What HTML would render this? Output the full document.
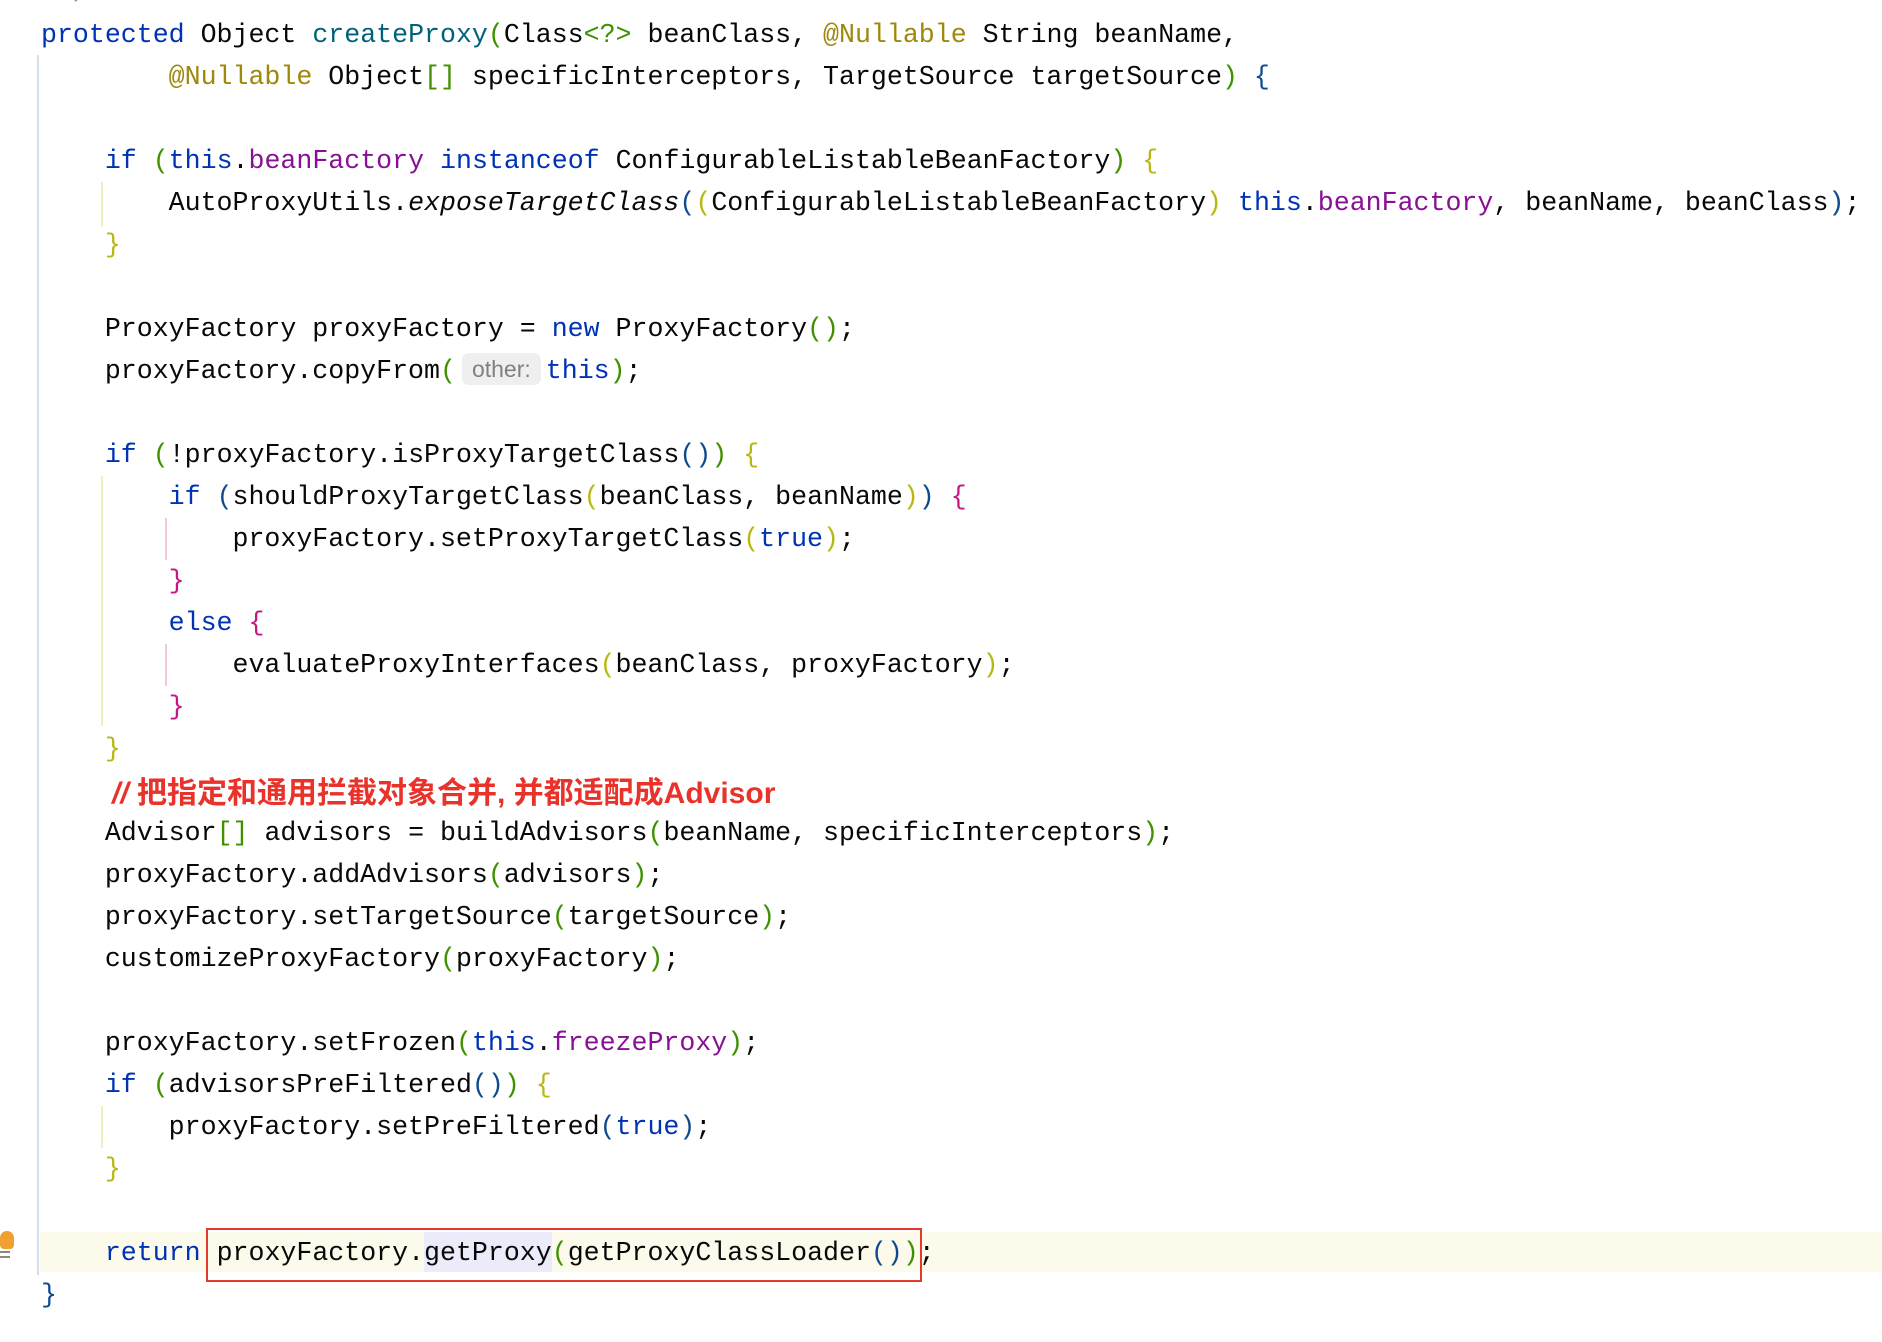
<!DOCTYPE html>
<html><head><meta charset="utf-8"><style>
html,body{margin:0;padding:0;background:#fff;width:1882px;height:1342px;overflow:hidden;position:relative}
.l{position:absolute;left:41px;height:42px;line-height:42px;white-space:pre;font-family:"Liberation Mono",monospace;font-size:26.6px;color:#080808;margin-top:1px}
.k{color:#0033b3}.m{color:#00627a}.a{color:#9e880d}.f{color:#871094}
.g{color:#3f9101}.b{color:#0e4a8e}.y{color:#b8b814}.p{color:#c71585}
.i{font-style:italic}
.hint{display:inline-block;background:#efefef;color:#808080;font-family:"Liberation Sans",sans-serif;font-size:23px;line-height:32px;border-radius:7px;padding:0 10px;vertical-align:middle;margin:-4px 5px 0 6px}
.v{position:absolute;width:2px}
</style></head><body>
<div style="position:absolute;left:40px;top:1232px;width:1842px;height:40px;background:#fbfaeb"></div>
<div class="v" style="left:37px;top:55px;height:1220px;background:#d3dfee"></div>
<div class="v" style="left:101px;top:182px;height:45px;background:#f0efc0"></div>
<div class="v" style="left:101px;top:476px;height:250px;background:#f0efc0"></div>
<div class="v" style="left:165px;top:518px;height:42px;background:#f5c6df"></div>
<div class="v" style="left:165px;top:644px;height:42px;background:#f5c6df"></div>
<div class="v" style="left:101px;top:1106px;height:42px;background:#f0efc0"></div>
<div style="position:absolute;left:0;top:1231px;width:14px;height:18px;background:#f0a030;border-radius:7px 7px 4px 4px"></div>
<div style="position:absolute;left:0;top:1251px;width:10px;height:2px;background:#888"></div>
<div style="position:absolute;left:0;top:1256px;width:10px;height:2px;background:#888"></div>
<div style="position:absolute;left:424px;top:1232px;width:128px;height:40px;background:#ecebfa"></div>
<div style="position:absolute;left:206px;top:1228px;width:712px;height:50px;border:2px solid #e33a2e"></div>
<div class="l" style="top:-28px;color:#8c8c8c"> */</div>
<div class="l" style="top:13px"><span class="k">protected</span> Object <span class="m">createProxy</span><span class="g">(</span>Class<span class="g">&lt;?&gt;</span> beanClass, <span class="a">@Nullable</span> String beanName,</div>
<div class="l" style="top:55px">        <span class="a">@Nullable</span> Object<span class="g">[]</span> specificInterceptors, TargetSource targetSource<span class="g">)</span> <span class="b">{</span></div>
<div class="l" style="top:139px">    <span class="k">if</span> <span class="g">(</span><span class="k">this</span>.<span class="f">beanFactory</span> <span class="k">instanceof</span> ConfigurableListableBeanFactory<span class="g">)</span> <span class="y">{</span></div>
<div class="l" style="top:181px">        AutoProxyUtils.<span class="i">exposeTargetClass</span><span class="b">(</span><span class="y">(</span>ConfigurableListableBeanFactory<span class="y">)</span> <span class="k">this</span>.<span class="f">beanFactory</span>, beanName, beanClass<span class="b">)</span>;</div>
<div class="l" style="top:223px">    <span class="y">}</span></div>
<div class="l" style="top:307px">    ProxyFactory proxyFactory = <span class="k">new</span> ProxyFactory<span class="g">()</span>;</div>
<div class="l" style="top:349px">    proxyFactory.copyFrom<span class="g">(</span><span class="hint">other:</span><span class="k">this</span><span class="g">)</span>;</div>
<div class="l" style="top:433px">    <span class="k">if</span> <span class="g">(</span>!proxyFactory.isProxyTargetClass<span class="b">()</span><span class="g">)</span> <span class="y">{</span></div>
<div class="l" style="top:475px">        <span class="k">if</span> <span class="b">(</span>shouldProxyTargetClass<span class="y">(</span>beanClass, beanName<span class="y">)</span><span class="b">)</span> <span class="p">{</span></div>
<div class="l" style="top:517px">            proxyFactory.setProxyTargetClass<span class="y">(</span><span class="k">true</span><span class="y">)</span>;</div>
<div class="l" style="top:559px">        <span class="p">}</span></div>
<div class="l" style="top:601px">        <span class="k">else</span> <span class="p">{</span></div>
<div class="l" style="top:643px">            evaluateProxyInterfaces<span class="y">(</span>beanClass, proxyFactory<span class="y">)</span>;</div>
<div class="l" style="top:685px">        <span class="p">}</span></div>
<div class="l" style="top:727px">    <span class="y">}</span></div>
<div class="l" style="top:772px;left:112px;font-family:'Liberation Sans','Noto Sans CJK SC',sans-serif;font-weight:bold;font-size:30px;color:#e8322a"><i>//</i> 把指定和通用拦截对象合并, 并都适配成Advisor</div>
<div class="l" style="top:811px">    Advisor<span class="g">[]</span> advisors = buildAdvisors<span class="g">(</span>beanName, specificInterceptors<span class="g">)</span>;</div>
<div class="l" style="top:853px">    proxyFactory.addAdvisors<span class="g">(</span>advisors<span class="g">)</span>;</div>
<div class="l" style="top:895px">    proxyFactory.setTargetSource<span class="g">(</span>targetSource<span class="g">)</span>;</div>
<div class="l" style="top:937px">    customizeProxyFactory<span class="g">(</span>proxyFactory<span class="g">)</span>;</div>
<div class="l" style="top:1021px">    proxyFactory.setFrozen<span class="g">(</span><span class="k">this</span>.<span class="f">freezeProxy</span><span class="g">)</span>;</div>
<div class="l" style="top:1063px">    <span class="k">if</span> <span class="g">(</span>advisorsPreFiltered<span class="b">()</span><span class="g">)</span> <span class="y">{</span></div>
<div class="l" style="top:1105px">        proxyFactory.setPreFiltered<span class="b">(</span><span class="k">true</span><span class="b">)</span>;</div>
<div class="l" style="top:1147px">    <span class="y">}</span></div>
<div class="l" style="top:1231px">    <span class="k">return</span> proxyFactory.getProxy<span class="g">(</span>getProxyClassLoader<span class="b">()</span><span class="g">)</span>;</div>
<div class="l" style="top:1273px"><span class="b">}</span></div>
</body></html>
